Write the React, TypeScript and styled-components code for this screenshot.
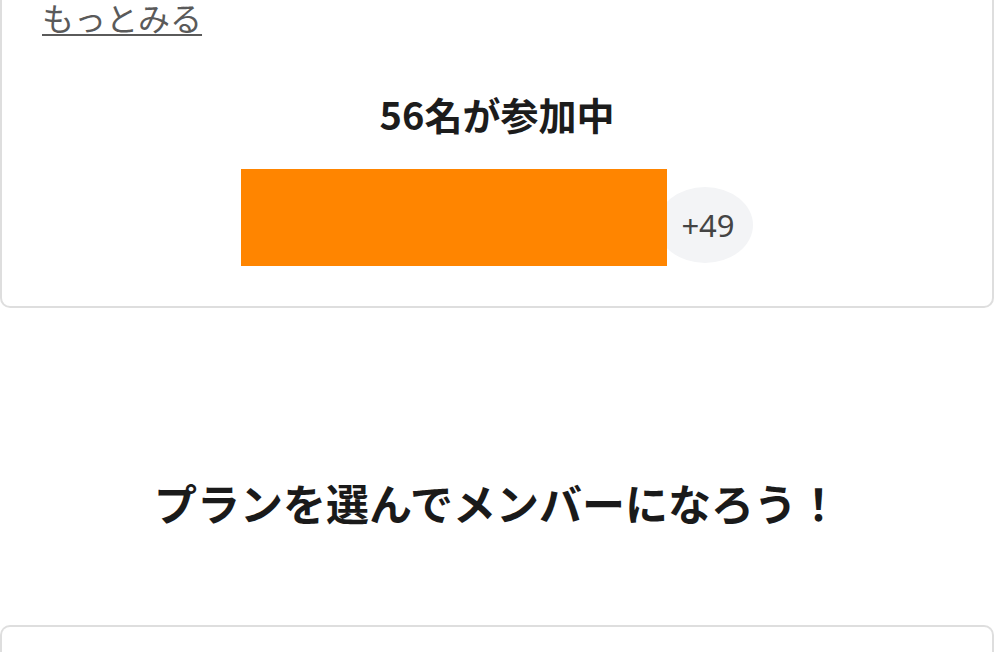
import * as React from "react";
import styled, { createGlobalStyle } from "styled-components";

const GlobalStyle = createGlobalStyle`
  html, body {
    margin: 0;
    padding: 0;
    background: #ffffff;
  }
  body {
    font-family: "Noto Sans CJK JP", "Noto Sans", sans-serif;
    color: #1c1c1c;
  }
`;

const Page = styled.div`
  width: 994px;
  display: flex;
  flex-direction: column;
`;

const Card = styled.section<{ $open?: "top" | "bottom" }>`
  border: 2px solid #dedede;
  border-radius: 10px;
  ${props => props.$open === "top" && "border-top: none; border-top-left-radius: 0; border-top-right-radius: 0;"}
  ${props => props.$open === "bottom" && "border-bottom: none; border-bottom-left-radius: 0; border-bottom-right-radius: 0;"}
  background: #ffffff;
`;

const TopCard = styled(Card)`
  padding: 0 40px 40px;
  display: flex;
  flex-direction: column;
`;

const MoreLink = styled.a`
  align-self: flex-start;
  font-size: 32px;
  line-height: 36px;
  margin-top: -1px;
  color: #5a5a5a;
  text-decoration: underline;
  text-decoration-thickness: 2px;
  text-underline-offset: 3px;
  cursor: pointer;
`;

const CountTitle = styled.h3`
  margin: 55px 0 0;
  text-align: center;
  font-size: 38px;
  line-height: 48px;
  font-weight: 700;
  color: #1c1c1c;
`;

const AvatarRow = styled.div`
  margin-top: 31px;
  display: flex;
  justify-content: center;
  align-items: flex-start;
`;

const Masked = styled.div`
  width: 426px;
  height: 97px;
  background: #ff8500;
  position: relative;
  z-index: 1;
`;

const MoreBubble = styled.div`
  width: 96px;
  height: 76px;
  margin: 18px 0 0 -10px;
  border-radius: 50%;
  background: #f3f4f6;
  display: flex;
  align-items: center;
  justify-content: center;
  padding-left: 6px;
  box-sizing: border-box;
  font-family: "Noto Sans", sans-serif;
  font-size: 31px;
  color: #444;
`;

const PlanHeading = styled.h2`
  margin: 0;
  padding: 166px 0 95px;
  text-align: center;
  font-size: 43px;
  line-height: 56px;
  font-weight: 700;
  color: #1a1a1a;
`;

const BottomCard = styled(Card)`
  height: 40px;
`;

export default function App() {
  return (
    <>
      <GlobalStyle />
      <Page>
        <TopCard $open="top">
          <MoreLink>もっとみる</MoreLink>
          <CountTitle>56名が参加中</CountTitle>
          <AvatarRow>
            <Masked />
            <MoreBubble>+49</MoreBubble>
          </AvatarRow>
        </TopCard>
        <PlanHeading>プランを選んでメンバーになろう！</PlanHeading>
        <BottomCard $open="bottom" />
      </Page>
    </>
  );
}
